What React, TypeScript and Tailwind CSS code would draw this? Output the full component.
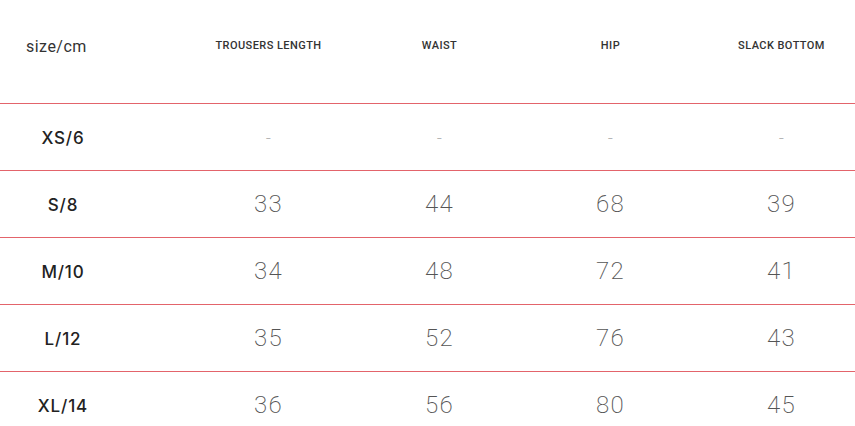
const headers = ["TROUSERS LENGTH", "WAIST", "HIP", "SLACK BOTTOM"];

const rows: { size: string; values: string[] }[] = [
  { size: "XS/6", values: ["-", "-", "-", "-"] },
  { size: "S/8", values: ["33", "44", "68", "39"] },
  { size: "M/10", values: ["34", "48", "72", "41"] },
  { size: "L/12", values: ["35", "52", "76", "43"] },
  { size: "XL/14", values: ["36", "56", "80", "45"] },
];

export default function App() {
  return (
    <div className="w-[855px] h-[426px] overflow-hidden bg-white font-['Roboto',sans-serif]">
      <div className="w-[867px]">
        <div className="grid grid-cols-[183px_repeat(4,171px)] h-[103px] items-center pb-[10px]">
          <div className="w-[112px] pl-[26px] text-[16px] text-[#333] tracking-[0.03em]">size/cm</div>
          {headers.map((h) => (
            <div key={h} className="text-center text-[11px] font-medium text-[#333] tracking-[0.04em]">
              {h}
            </div>
          ))}
        </div>
        {rows.map((r) => (
          <div key={r.size}>
            <div className="h-px bg-[#e3646b]" />
            <div className="grid grid-cols-[183px_repeat(4,171px)] h-[66px] items-center">
              <div className="w-[126px] pt-[3px] text-center font-['Inter',sans-serif] text-[17px] font-medium text-[#222] tracking-[0.05em]">
                {r.size}
              </div>
              {r.values.map((v, i) => (
                <div
                  key={i}
                  className={
                    v === "-"
                      ? "text-center text-[18px] font-extralight text-[#999]"
                      : "text-center text-[24px] font-extralight text-[#555] tracking-[0.05em]"
                  }
                >
                  {v}
                </div>
              ))}
            </div>
          </div>
        ))}
      </div>
    </div>
  );
}
